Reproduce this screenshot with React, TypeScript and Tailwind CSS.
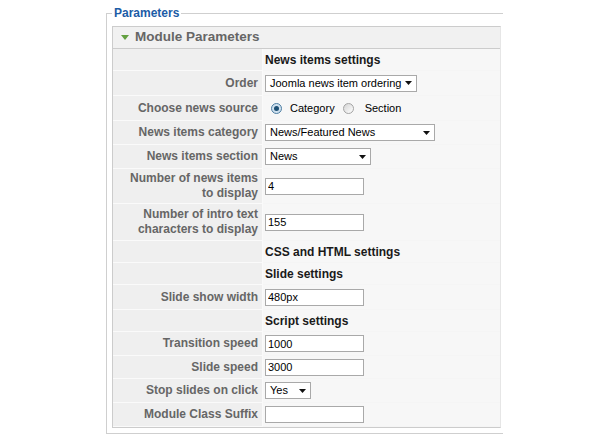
import type { ReactNode } from "react";

function Caret() {
  return (
    <svg width="7" height="4" viewBox="0 0 7 4" aria-hidden="true">
      <path d="M0 0h7L3.5 4z" fill="#111" />
    </svg>
  );
}

function SelectBox({ value, width }: { readonly value: string; readonly width: string }) {
  return (
    <div
      className={`flex h-[17px] items-center justify-between border border-[#a9a9a9] bg-white pl-[4px] pr-[4px] text-[11px] text-black ${width}`}
    >
      <span>{value}</span>
      <Caret />
    </div>
  );
}

function TextBox({ value }: { readonly value: string }) {
  return (
    <input
      readOnly
      defaultValue={value}
      className="h-[17px] w-[99px] border border-[#a9a9a9] bg-white px-[2px] text-[11px] text-black outline-none"
    />
  );
}

function Radio({ checked }: { readonly checked?: boolean }) {
  return (
    <span
      className={`flex h-[11px] w-[11px] items-center justify-center rounded-full border ${
        checked ? "border-[#4f7fa3] bg-[#cfe0ee]" : "border-[#a4a4a4] bg-linear-to-br from-[#d4d4d4] to-white"
      }`}
    >
      {checked ? <span className="h-[5px] w-[5px] rounded-full bg-[#1d4f73]" /> : null}
    </span>
  );
}

interface Row {
  readonly label?: readonly string[];
  readonly heading?: string;
  readonly height: string;
  readonly control?: ReactNode;
}

const rows: readonly Row[] = [
  { heading: "News items settings", height: "h-[22px]" },
  { label: ["Order"], height: "h-[25px]", control: <SelectBox value="Joomla news item ordering" width="w-[152px]" /> },
  {
    label: ["Choose news source"],
    height: "h-[25px]",
    control: (
      <div className="flex items-center pl-[6px] text-[11px] text-black">
        <Radio checked />
        <span className="ml-[8px]">Category</span>
        <span className="ml-[8px]">
          <Radio />
        </span>
        <span className="ml-[11px]">Section</span>
      </div>
    ),
  },
  { label: ["News items category"], height: "h-[24px]", control: <SelectBox value="News/Featured News" width="w-[170px]" /> },
  { label: ["News items section"], height: "h-[24px]", control: <SelectBox value="News" width="w-[106px]" /> },
  { label: ["Number of news items", "to display"], height: "h-[35px]", control: <TextBox value="4" /> },
  { label: ["Number of intro text", "characters to display"], height: "h-[37px]", control: <TextBox value="155" /> },
  { heading: "CSS and HTML settings", height: "h-[22px]" },
  { heading: "Slide settings", height: "h-[22px]" },
  { label: ["Slide show width"], height: "h-[25px]", control: <TextBox value="480px" /> },
  { heading: "Script settings", height: "h-[22px]" },
  { label: ["Transition speed"], height: "h-[24px]", control: <TextBox value="1000" /> },
  { label: ["Slide speed"], height: "h-[23px]", control: <TextBox value="3000" /> },
  { label: ["Stop slides on click"], height: "h-[24px]", control: <SelectBox value="Yes" width="w-[46px]" /> },
  { label: ["Module Class Suffix"], height: "h-[24px]", control: <TextBox value="" /> },
];

export default function App() {
  return (
    <div className="min-h-[440px] w-[600px] bg-white pt-[6px] font-['Liberation_Sans',Arial,sans-serif]">
      <fieldset className="ml-[106px] w-[397px] border border-r-0 border-[#cfcfcf] pb-[5px] pl-[5px] pt-[6px]">
        <legend className="px-[2px] text-[12px] font-bold leading-[14px] text-[#1c5ca6]">Parameters</legend>
        <div className="w-[389px] border border-r-[#e6e6e6] border-[#cccccc]">
          <div className="flex h-[22px] items-center border-b border-[#cccccc] bg-[#f1f1f1] pl-[8px]">
            <svg width="8" height="5" viewBox="0 0 8 5" aria-hidden="true">
              <path d="M0 0h8L4 5z" fill="#63a040" />
            </svg>
            <span className="ml-[6px] text-[13.5px] font-bold text-[#666666]">Module Parameters</span>
          </div>
          {rows.map((row, index) => (
            <div key={index} className={`flex ${row.height}`}>
              <div className="flex w-[150px] shrink-0 flex-col items-end justify-center border-b border-r border-[#fafafa] bg-[#efefef] pr-[4px] text-right text-[12px] font-bold leading-[15px] text-[#666666]">
                {row.label?.map((line) => <span key={line}>{line}</span>)}
              </div>
              <div className="flex flex-1 items-center border-b border-[#f5f5f5] bg-[#f7f7f7] pl-[2px]">
                {row.heading ? (
                  <span className="text-[12px] font-bold text-[#1a1a1a]">{row.heading}</span>
                ) : (
                  row.control
                )}
              </div>
            </div>
          ))}
        </div>
      </fieldset>
    </div>
  );
}
